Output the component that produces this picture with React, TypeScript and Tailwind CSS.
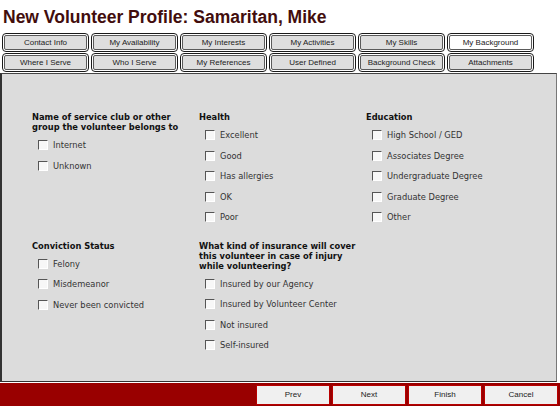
import React from "react";

const tabsTop = ["Contact Info", "My Availability", "My Interests", "My Activities", "My Skills", "My Background"];
const tabsBottom = ["Where I Serve", "Who I Serve", "My References", "User Defined", "Background Check", "Attachments"];

function Tab({ label, active }: { label: string; active?: boolean }) {
  return (
    <div className="w-[87px] h-[19px] rounded-[4px] border border-[#1a1a1a] bg-white p-px">
      <div
        className={
          "h-full rounded-[2px] border border-[#5a5a5a] flex items-center justify-center text-[8px] text-[#222] " +
          (active ? "bg-white" : "bg-[#dedede]")
        }
      >
        {label}
      </div>
    </div>
  );
}

function Check({ label }: { label: string }) {
  return (
    <div className="h-[20.5px] flex items-center pl-[6px] gap-[5px]">
      <span className="w-[10px] h-[10px] bg-[#f7f7f7] border-t border-l border-[#555] border-r-white border-b-white border-r border-b shrink-0" />
      <span className="text-[#333]">{label}</span>
    </div>
  );
}

function Group({ title, items }: { title: string[]; items: string[] }) {
  return (
    <div className="flex flex-col">
      <div className="font-bold text-[#111] leading-[10px]">
        {title.map((t) => (
          <div key={t}>{t}</div>
        ))}
      </div>
      <div className="mt-[3px] flex flex-col">
        {items.map((i) => (
          <Check key={i} label={i} />
        ))}
      </div>
    </div>
  );
}

export default function App() {
  return (
    <div className="w-[560px] h-[406px] bg-white flex flex-col font-['Liberation_Sans',Arial,sans-serif] overflow-hidden">
      <h1 className="h-[33px] pl-[3px] pt-[6px] text-[17.5px] leading-[22px] font-bold text-[#420d0d]">
        New Volunteer Profile: Samaritan, Mike
      </h1>

      <div className="flex flex-col gap-px pl-[2px]">
        <div className="flex gap-[2px]">
          {tabsTop.map((t) => (
            <Tab key={t} label={t} active={t === "My Background"} />
          ))}
        </div>
        <div className="flex gap-[2px]">
          {tabsBottom.map((t) => (
            <Tab key={t} label={t} />
          ))}
        </div>
      </div>

      <div className="mt-px h-[309px] w-[557px] bg-[#dcdcdc] border-t border-l-2 border-r border-b border-t-[#444] border-l-[#333] border-r-[#777] border-b-[#333] pl-[30px] pt-[38px] font-['DejaVu_Sans',Verdana,sans-serif] text-[8.3px]">
        <div className="grid grid-cols-[167px_167px_167px] gap-y-[13px]">
          <Group title={["Name of service club or other", "group the volunteer belongs to"]} items={["Internet", "Unknown"]} />
          <Group title={["Health"]} items={["Excellent", "Good", "Has allergies", "OK", "Poor"]} />
          <Group
            title={["Education"]}
            items={["High School / GED", "Associates Degree", "Undergraduate Degree", "Graduate Degree", "Other"]}
          />
          <Group title={["Conviction Status"]} items={["Felony", "Misdemeanor", "Never been convicted"]} />
          <Group
            title={["What kind of insurance will cover", "this volunteer in case of injury", "while volunteering?"]}
            items={["Insured by our Agency", "Insured by Volunteer Center", "Not insured", "Self-insured"]}
          />
        </div>
      </div>

      <div className="mt-px flex-1 bg-[#990000] flex justify-end items-center gap-[2px] pr-[2px]">
        {["Prev", "Next", "Finish", "Cancel"].map((b) => (
          <button
            key={b}
            className="w-[74px] h-[20px] bg-[#f0f0f0] border border-[#b80000] text-[8px] text-[#222] flex items-center justify-center"
          >
            {b}
          </button>
        ))}
      </div>
    </div>
  );
}
